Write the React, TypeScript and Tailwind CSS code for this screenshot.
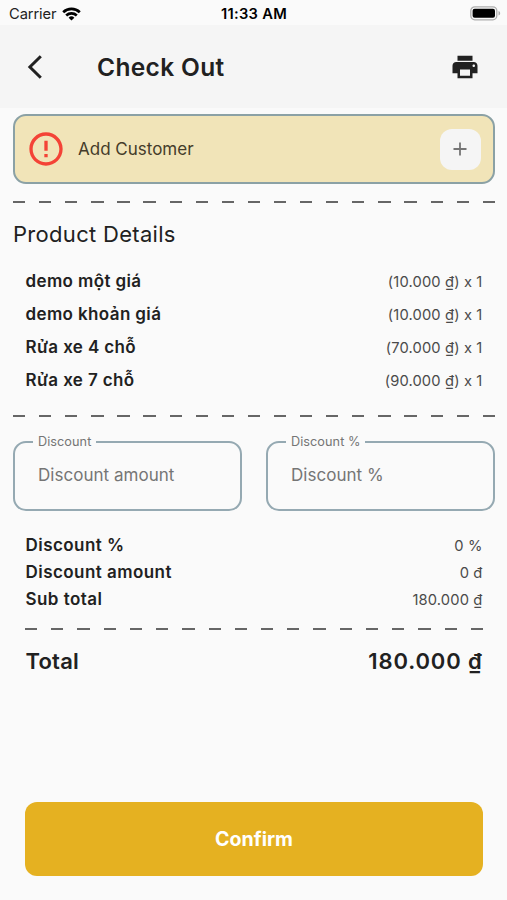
import { MdErrorOutline, MdPrint } from "react-icons/md";

type Row = { label: string; value: string };

const products: Row[] = [
  { label: "demo một giá", value: "(10.000 ₫) x 1" },
  { label: "demo khoản giá", value: "(10.000 ₫) x 1" },
  { label: "Rửa xe 4 chỗ", value: "(70.000 ₫) x 1" },
  { label: "Rửa xe 7 chỗ", value: "(90.000 ₫) x 1" },
];

const summary: Row[] = [
  { label: "Discount %", value: "0 %" },
  { label: "Discount amount", value: "0 đ" },
  { label: "Sub total", value: "180.000 ₫" },
];

export default function App() {
  return (
    <div className="flex h-[900px] w-[507px] flex-col overflow-hidden bg-[#fafafa] font-['Inter',sans-serif] text-[#212121]">
      <StatusBar />

      <header className="flex h-[83px] shrink-0 items-center bg-[#f5f5f5] pl-[27px] pr-[27px]">
        <button type="button" aria-label="Back">
          <svg width="16" height="24" viewBox="0 0 16 24" fill="none" stroke="currentColor" strokeWidth="3">
            <path d="M13.8 1.2 2.9 12l10.9 10.8" />
          </svg>
        </button>
        <h1 className="ml-[54px] text-[24.5px] leading-8 font-semibold tracking-[0.35px]">Check Out</h1>
        <button type="button" aria-label="Print" className="ml-auto">
          <MdPrint size={30} />
        </button>
      </header>

      <main className="flex flex-1 flex-col pt-[6px] pr-[12px] pl-[13px]">
        <section className="flex h-[70px] items-center rounded-[13px] border-2 border-[#8ba1a5] bg-[#f1e4b8] pl-[11px] pr-[12.5px]">
          <MdErrorOutline size={40} className="text-[#f44336]" />
          <span className="ml-3 pt-0.5 text-[17px] text-[#453c2a]">Add Customer</span>
          <button
            type="button"
            aria-label="Add customer"
            className="ml-auto flex size-[41px] items-center justify-center rounded-xl bg-[#f5f5f5]"
          >
            <svg width="14" height="14" viewBox="0 0 14 14" stroke="#757575" strokeWidth="1.8">
              <path d="M7 .5v13M.5 7h13" />
            </svg>
          </button>
        </section>

        <div className="mt-[17px]">
          <DashedLine count={19} />
        </div>

        <h2 className="mt-[15px] text-[22px] leading-8 tracking-[0.3px]">Product Details</h2>

        <ul className="mt-[15px] px-[12.5px]">
          {products.map((item) => (
            <li key={item.label} className="flex h-[33px] items-center justify-between">
              <span className="text-[17px] font-semibold tracking-[0.38px]">{item.label}</span>
              <span className="pt-px text-[14.7px] tracking-[0.15px] text-[#4a4a4a]">{item.value}</span>
            </li>
          ))}
        </ul>

        <div className="mt-[18px]">
          <DashedLine count={19} />
        </div>

        <div className="mt-[17px] grid grid-cols-2 gap-6">
          <DiscountField label="Discount" placeholder="Discount amount" />
          <DiscountField label="Discount %" placeholder="Discount %" />
        </div>

        <dl className="mt-[21px] px-[12.5px]">
          {summary.map((item) => (
            <div key={item.label} className="flex h-[27px] items-center justify-between">
              <dt className="text-[17px] font-semibold tracking-[0.45px]">{item.label}</dt>
              <dd className="pt-px text-[14.7px] tracking-[0.15px] text-[#4a4a4a]">{item.value}</dd>
            </div>
          ))}
        </dl>

        <div className="mt-[15px] px-3">
          <DashedLine count={18} />
        </div>

        <div className="mt-[15px] flex items-center justify-between px-[12.5px] text-[22px] leading-8 font-semibold">
          <span className="tracking-[0.2px]">Total</span>
          <span className="tracking-[0.85px]">180.000 ₫</span>
        </div>

        <button
          type="button"
          className="mx-3 mt-auto mb-6 h-[74px] rounded-xl bg-[#e5b121] pt-0.5 text-[19.6px] font-bold text-white"
        >
          Confirm
        </button>
      </main>
    </div>
  );
}

function StatusBar() {
  return (
    <div className="grid h-[25px] shrink-0 grid-cols-3 items-center pt-[3px] pl-[9px] pr-[6px] text-[14.7px] text-black">
      <div className="flex items-center gap-[6px] text-[#222]">
        <span className="tracking-[-0.1px]">Carrier</span>
        <svg width="19" height="14" viewBox="0 0 19 14" fill="none" stroke="#000" strokeWidth="2.7">
          <path d="M1.2 5.2a12 12 0 0 1 16.6 0" />
          <path d="M4.2 8.5a7.8 7.8 0 0 1 10.6 0" />
          <path d="M9.5 13.6 6.6 10.7a4.2 4.2 0 0 1 5.8 0z" fill="#000" stroke="none" />
        </svg>
      </div>
      <span className="-ml-0.5 text-center font-semibold tracking-[0.3px]">11:33 AM</span>
      <svg className="ml-auto -mt-px" width="31" height="15" viewBox="0 0 31 15">
        <rect x=".8" y=".8" width="26" height="13" rx="4" fill="#fafafa" stroke="#adadad" strokeWidth="1.3" />
        <rect x="2.6" y="2.8" width="22.4" height="9" rx="2" fill="#000" />
        <path d="M28.5 5v4.6a2.4 2.4 0 0 0 0-4.6z" fill="#adadad" />
      </svg>
    </div>
  );
}

function DashedLine({ count }: { count: number }) {
  return (
    <div className="flex h-0.5 justify-between" aria-hidden="true">
      {Array.from({ length: count }, (_, index) => (
        <span key={index} className="h-full w-[12.25px] bg-[#666]" />
      ))}
    </div>
  );
}

function DiscountField({ label, placeholder }: { label: string; placeholder: string }) {
  return (
    <fieldset className="h-[77px] min-w-0 rounded-[13px] border-2 border-[#95a9b2] pl-[18px]">
      <legend className="h-4 px-[5px] text-[12.7px] leading-4 tracking-[0.05px] text-[#757575]">{label}</legend>
      <input
        type="text"
        aria-label={label}
        placeholder={placeholder}
        className="mt-[13px] w-full bg-transparent pl-[5px] text-[17px] leading-6 tracking-[0.03px] outline-none placeholder:text-[#757575]"
      />
    </fieldset>
  );
}
